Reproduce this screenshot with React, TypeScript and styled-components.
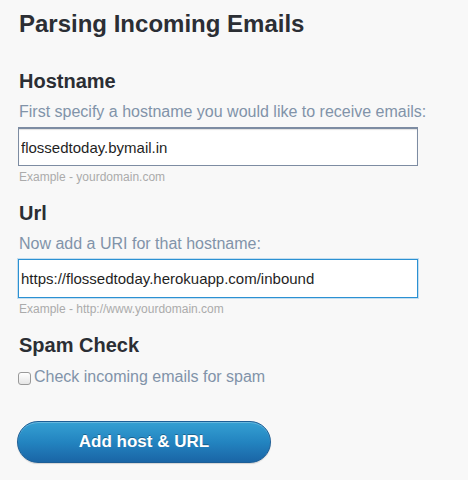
import React from "react";
import styled, { createGlobalStyle } from "styled-components";

const Global = createGlobalStyle`
  html, body { margin: 0; padding: 0; background: #f8f8f8; }
  body { font-family: "Liberation Sans", Arial, Helvetica, sans-serif; }
`;

const Page = styled.div`
  display: flex;
  flex-direction: column;
  align-items: flex-start;
  padding: 10px 0 20px 19px;
  width: 468px;
  box-sizing: border-box;
`;

const Title = styled.h1`
  margin: 0;
  font-size: 24px;
  line-height: 28px;
  font-weight: bold;
  color: #2b2e34;
`;

const Heading = styled.h2<{ $first?: boolean }>`
  margin: ${(p) => (p.$first ? "31px" : "17px")} 0 0;
  font-size: 20px;
  line-height: 24px;
  font-weight: bold;
  color: #2b2e34;
`;

const Desc = styled.p`
  margin: 9px 0 0;
  font-size: 16px;
  line-height: 20px;
  color: #8193a9;
`;

const Field = styled.input<{ $focused?: boolean }>`
  margin: 5px 0 0 -1px;
  width: 400px;
  height: 39px;
  box-sizing: border-box;
  padding: 0 0 0 2px;
  font-family: "Liberation Sans", Arial, sans-serif;
  font-size: 15px;
  color: #1f1f1f;
  background: #fff;
  border: 1px solid ${(p) => (p.$focused ? "#2b91d3" : "#7d8ca2")};
  border-width: ${(p) => (p.$focused ? "1px" : "2px 1px 1px 1px")};
  box-shadow: ${(p) =>
    p.$focused
      ? "0 0 0 1px rgba(43,145,211,0.25)"
      : "inset 0 1px 1px rgba(0,0,0,0.12)"};
  outline: none;
  border-radius: 0;
`;

const Hint = styled.div`
  margin: 4px 0 0;
  font-size: 12px;
  line-height: 14px;
  color: #ababab;
`;

const CheckRow = styled.label`
  margin: 10px 0 0 -1px;
  display: flex;
  align-items: center;
  gap: 3px;
  font-size: 16px;
  line-height: 20px;
  color: #8193a9;
`;

const Box = styled.span`
  width: 11px;
  height: 11px;
  margin-top: 3px;
  border: 1px solid #9a9a9a;
  border-radius: 3px;
  background: linear-gradient(#ffffff, #e6e6e6);
  box-sizing: content-box;
`;

const Button = styled.button`
  margin: 34px 0 0 -2px;
  width: 254px;
  height: 42px;
  border-radius: 21px;
  border: 1px solid #1d5e96;
  background: linear-gradient(#35a0d3 0%, #2384c0 50%, #1a65a6 100%);
  box-shadow: inset 0 1px 0 rgba(255, 255, 255, 0.25), 0 1px 1px rgba(0,0,0,0.15);
  color: #fff;
  font-family: "Liberation Sans", Arial, sans-serif;
  font-size: 17px;
  font-weight: bold;
  text-shadow: 0 -1px 0 rgba(0, 0, 0, 0.3);
  cursor: pointer;
`;

export default function App() {
  return (
    <>
      <Global />
      <Page>
        <Title>Parsing Incoming Emails</Title>
        <Heading $first>Hostname</Heading>
        <Desc>First specify a hostname you would like to receive emails:</Desc>
        <Field defaultValue="flossedtoday.bymail.in" />
        <Hint>Example - yourdomain.com</Hint>
        <Heading>Url</Heading>
        <Desc>Now add a URI for that hostname:</Desc>
        <Field $focused defaultValue="https://flossedtoday.herokuapp.com/inbound" />
        <Hint>Example - http://www.yourdomain.com</Hint>
        <Heading>Spam Check</Heading>
        <CheckRow>
          <Box />
          Check incoming emails for spam
        </CheckRow>
        <Button>Add host &amp; URL</Button>
      </Page>
    </>
  );
}
